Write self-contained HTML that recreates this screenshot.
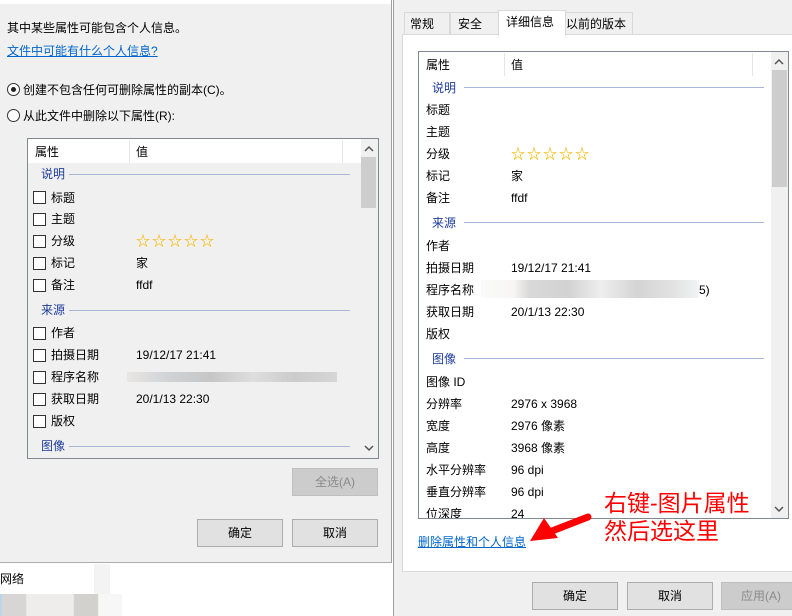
<!DOCTYPE html>
<html><head><meta charset="utf-8"><style>
*{margin:0;padding:0;box-sizing:border-box}
body{width:792px;height:616px;overflow:hidden;background:#fff;position:relative;font-family:"Liberation Sans","Noto Sans CJK SC",sans-serif;font-size:12px;color:#000}
.a{position:absolute;white-space:nowrap;line-height:14px}
.sec{color:#1e3c9c}
.ln{position:absolute;height:1px;background:#a8b4d8}
.cb{position:absolute;width:13px;height:13px;border:1px solid #333;background:#fff}
.btn{position:absolute;height:28px;border:1px solid #adadad;background:#e1e1e1;text-align:center;line-height:26px}
.dis{color:#8a8a8a;background:#cccccc;border-color:#bfbfbf}
.star{color:#f2b400;font-size:14px;letter-spacing:2px;text-shadow:0 0 0 #ffe680}
.lnk{color:#0066cc;text-decoration:underline}
.blur{position:absolute;height:18px}
</style></head><body>
<div style="position:absolute;left:0;top:4px;width:391px;height:559px;background:#f0f0f0;border-bottom:1px solid #adadad"></div>
<div style="position:absolute;left:391px;top:0;width:1px;height:563px;background:#a0a0a0"></div>
<div class="a" style="left:7px;top:21px">其中某些属性可能包含个人信息。</div>
<div class="a lnk" style="left:7px;top:44px">文件中可能有什么个人信息?</div>
<div style="position:absolute;left:7px;top:83px;width:13px;height:13px;border:1px solid #333;border-radius:50%;background:#fff"><div style="position:absolute;left:3px;top:3px;width:5px;height:5px;border-radius:50%;background:#222"></div></div>
<div class="a" style="left:23px;top:83px">创建不包含任何可删除属性的副本(C)。</div>
<div style="position:absolute;left:7px;top:109px;width:13px;height:13px;border:1px solid #333;border-radius:50%;background:#fff"></div>
<div class="a" style="left:23px;top:109px">从此文件中删除以下属性(R):</div>
<div style="position:absolute;left:27px;top:138px;width:352px;height:321px;border:1px solid #828790;background:#f0f0f0"></div>
<div style="position:absolute;left:28px;top:139px;width:333px;height:24px;background:#fff"></div>
<div style="position:absolute;left:129px;top:140px;width:1px;height:23px;background:#e5e5e5"></div>
<div style="position:absolute;left:342px;top:140px;width:1px;height:23px;background:#e5e5e5"></div>
<div class="a" style="left:35px;top:145px">属性</div>
<div class="a" style="left:136px;top:145px">值</div>
<div style="position:absolute;left:361px;top:139px;width:17px;height:319px;background:#f0f0f0"></div>
<svg style="position:absolute;left:364px;top:145px" width="10" height="8"><path d="M1 6 L5 2 L9 6" stroke="#555" stroke-width="1.5" fill="none"/></svg>
<div style="position:absolute;left:361px;top:157px;width:15px;height:51px;background:#cdcdcd"></div>
<svg style="position:absolute;left:364px;top:444px" width="10" height="8"><path d="M1 2 L5 6 L9 2" stroke="#555" stroke-width="1.5" fill="none"/></svg>
<div class="a sec" style="left:41px;top:167px">说明</div><div class="ln" style="left:69px;top:174px;width:281px"></div>
<div class="cb" style="left:33px;top:191px"></div><div class="a" style="left:51px;top:191px">标题</div>
<div class="cb" style="left:33px;top:213px"></div><div class="a" style="left:51px;top:212px">主题</div>
<div class="cb" style="left:33px;top:235px"></div><div class="a" style="left:51px;top:234px">分级</div><div class="a star" style="left:136px;top:234px">☆☆☆☆☆</div>
<div class="cb" style="left:33px;top:257px"></div><div class="a" style="left:51px;top:256px">标记</div><div class="a" style="left:136px;top:256px">家</div>
<div class="cb" style="left:33px;top:279px"></div><div class="a" style="left:51px;top:278px">备注</div><div class="a" style="left:136px;top:278px">ffdf</div>
<div class="a sec" style="left:41px;top:303px">来源</div><div class="ln" style="left:69px;top:310px;width:281px"></div>
<div class="cb" style="left:33px;top:327px"></div><div class="a" style="left:51px;top:326px">作者</div>
<div class="cb" style="left:33px;top:349px"></div><div class="a" style="left:51px;top:348px">拍摄日期</div><div class="a" style="left:136px;top:348px">19/12/17 21:41</div>
<div class="cb" style="left:33px;top:371px"></div><div class="a" style="left:51px;top:370px">程序名称</div>
<div class="blur" style="left:127px;top:372px;width:210px;height:10px;background:linear-gradient(90deg,#e8e6e3,#d0d2d5 20%,#c6c6c6 40%,#dedede 60%,#cbcbcb 80%,#d6d6d6)"></div>
<div class="cb" style="left:33px;top:393px"></div><div class="a" style="left:51px;top:392px">获取日期</div><div class="a" style="left:136px;top:392px">20/1/13 22:30</div>
<div class="cb" style="left:33px;top:415px"></div><div class="a" style="left:51px;top:414px">版权</div>
<div class="a sec" style="left:41px;top:439px">图像</div><div class="ln" style="left:69px;top:446px;width:281px"></div>
<div class="btn dis" style="left:292px;top:468px;width:86px">全选(A)</div>
<div class="btn" style="left:197px;top:519px;width:86px">确定</div>
<div class="btn" style="left:292px;top:519px;width:86px">取消</div>
<div class="a" style="left:0;top:572px">网络</div>
<div style="position:absolute;left:94px;top:564px;width:16px;height:52px;background:#f3f3f3"></div>
<div style="position:absolute;left:0;top:594px;width:122px;height:22px;background:linear-gradient(90deg,#b8d4ee 1%,#d8d6d4 2%,#d8d6d4 21%,#eeedec 22%,#eeedec 60%,#d3d1ce 61%,#d3d1ce 80%,#f7f7f8 81%)"></div>
<div style="position:absolute;left:393px;top:0;width:1px;height:616px;background:#a0a0a0"></div>
<div style="position:absolute;left:394px;top:0;width:398px;height:616px;background:#f0f0f0"></div>
<div style="position:absolute;left:402px;top:34px;width:392px;height:538px;background:#fff;border:1px solid #d9d9d9"></div>
<div style="position:absolute;left:404px;top:12px;width:46px;height:22px;border:1px solid #d9d9d9;border-bottom:none;background:#f0f0f0"></div><div class="a" style="left:410px;top:17px">常规</div>
<div style="position:absolute;left:450px;top:12px;width:49px;height:22px;border:1px solid #d9d9d9;border-bottom:none;background:#f0f0f0"></div><div class="a" style="left:458px;top:17px">安全</div>
<div style="position:absolute;left:498px;top:10px;width:68px;height:26px;border:1px solid #d9d9d9;border-bottom:none;background:#fff"></div><div class="a" style="left:506px;top:15px">详细信息</div>
<div style="position:absolute;left:565px;top:12px;width:68px;height:22px;border:1px solid #d9d9d9;border-bottom:none;background:#f0f0f0"></div><div class="a" style="left:566px;top:17px">以前的版本</div>
<div style="position:absolute;left:418px;top:51px;width:371px;height:468px;border:1px solid #828790;background:#fff"></div>
<div style="position:absolute;left:504px;top:53px;width:1px;height:23px;background:#e5e5e5"></div>
<div style="position:absolute;left:752px;top:53px;width:1px;height:23px;background:#e5e5e5"></div>
<div class="a" style="left:426px;top:58px">属性</div><div class="a" style="left:511px;top:58px">值</div>
<div style="position:absolute;left:771px;top:52px;width:17px;height:466px;background:#f0f0f0"></div>
<svg style="position:absolute;left:774px;top:58px" width="10" height="8"><path d="M1 6 L5 2 L9 6" stroke="#555" stroke-width="1.5" fill="none"/></svg>
<div style="position:absolute;left:772px;top:70px;width:15px;height:117px;background:#cdcdcd"></div>
<svg style="position:absolute;left:774px;top:505px" width="10" height="8"><path d="M1 2 L5 6 L9 2" stroke="#555" stroke-width="1.5" fill="none"/></svg>
<div style="position:absolute;left:419px;top:52px;width:352px;height:466px;overflow:hidden">
<div class="a sec" style="left:13px;top:29px">说明</div><div class="ln" style="left:45px;top:35px;width:300px"></div>
<div class="a" style="left:7px;top:51px">标题</div>
<div class="a" style="left:7px;top:73px">主题</div>
<div class="a" style="left:7px;top:95px">分级</div><div class="a star" style="left:92px;top:95px">☆☆☆☆☆</div>
<div class="a" style="left:7px;top:117px">标记</div><div class="a" style="left:92px;top:117px">家</div>
<div class="a" style="left:7px;top:139px">备注</div><div class="a" style="left:92px;top:139px">ffdf</div>
<div class="a sec" style="left:13px;top:164px">来源</div><div class="ln" style="left:45px;top:170px;width:300px"></div>
<div class="a" style="left:7px;top:187px">作者</div>
<div class="a" style="left:7px;top:209px">拍摄日期</div><div class="a" style="left:92px;top:209px">19/12/17 21:41</div>
<div class="a" style="left:7px;top:231px">程序名称</div>
<div class="blur" style="left:62px;top:228px;width:218px;background:linear-gradient(90deg,#fafafa 0%,#f7f6f4 15%,#d9d9d9 22%,#d2d2d2 40%,#eeeeee 55%,#d4d4d4 72%,#e2e2e2 88%,#f2f3f5)"></div>
<div class="a" style="left:280px;top:231px">5)</div>
<div class="a" style="left:7px;top:253px">获取日期</div><div class="a" style="left:92px;top:253px">20/1/13 22:30</div>
<div class="a" style="left:7px;top:275px">版权</div>
<div class="a sec" style="left:13px;top:300px">图像</div><div class="ln" style="left:45px;top:306px;width:300px"></div>
<div class="a" style="left:7px;top:323px">图像 ID</div>
<div class="a" style="left:7px;top:345px">分辨率</div><div class="a" style="left:92px;top:345px">2976 x 3968</div>
<div class="a" style="left:7px;top:367px">宽度</div><div class="a" style="left:92px;top:367px">2976 像素</div>
<div class="a" style="left:7px;top:389px">高度</div><div class="a" style="left:92px;top:389px">3968 像素</div>
<div class="a" style="left:7px;top:411px">水平分辨率</div><div class="a" style="left:92px;top:411px">96 dpi</div>
<div class="a" style="left:7px;top:433px">垂直分辨率</div><div class="a" style="left:92px;top:433px">96 dpi</div>
<div class="a" style="left:7px;top:455px">位深度</div><div class="a" style="left:92px;top:455px">24</div>
</div>
<div class="a lnk" style="left:418px;top:535px">删除属性和个人信息</div>
<svg style="position:absolute;left:528px;top:510px" width="66" height="34"><path d="M60 7 L24 21" stroke="#f00" stroke-width="7" stroke-linecap="round"/><polygon points="2,31 16,8 30,28" fill="#f00"/></svg>
<div class="a" style="left:604px;top:489px;font-size:23px;line-height:28px;color:#f00">右键-图片属性<br>然后选这里</div>
<div class="btn" style="left:532px;top:582px;width:86px">确定</div>
<div class="btn" style="left:627px;top:582px;width:86px">取消</div>
<div class="btn dis" style="left:721px;top:582px;width:80px">应用(A)</div>
</body></html>
